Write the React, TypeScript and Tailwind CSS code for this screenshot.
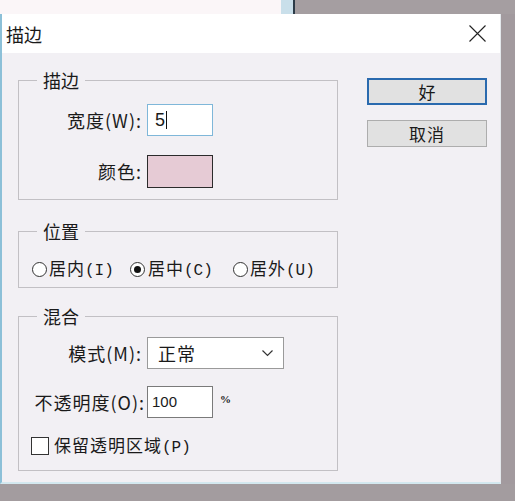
import React from "react";

const font = { fontFamily: '"Noto Sans CJK SC", "Noto Sans", sans-serif' };
const mono = { fontFamily: '"Liberation Mono", monospace' };

function Radio({ checked }: { checked?: boolean }) {
  return (
    <span className="w-[15px] h-[15px] rounded-full border border-[#333] bg-white flex items-center justify-center shrink-0">
      {checked && <span className="w-[7px] h-[7px] rounded-full bg-[#111]" />}
    </span>
  );
}

function Sim({ cjk, key2 }: { cjk: string; key2: string }) {
  return (
    <span className="whitespace-nowrap leading-[22px]">
      <span className="tracking-[1px]">{cjk}</span>
      <span className="text-[16px]" style={mono}>({key2})</span>
    </span>
  );
}

export default function App() {
  return (
    <div
      className="w-[515px] h-[501px] bg-[#a39c9f] overflow-hidden flex flex-col text-[#1a1a1a]"
      style={font}
    >
      {/* background window strip */}
      <div className="h-[14px] flex shrink-0">
        <div className="w-[281px] bg-[#fbf6f8]" />
        <div className="w-[12px] bg-[#c9dfea]" />
        <div className="w-[2px] bg-[#2c3b48]" />
        <div className="flex-1 bg-[#a59ea1]" />
      </div>

      <div className="flex h-[470px] shrink-0">
        {/* dialog */}
        <div className="w-[501px] flex flex-col bg-[#f2f0f4] border-l-2 border-l-[#8cc0d8] border-r border-r-[#e3e8ec] border-b-2 border-b-[#d3e8ef]">
          {/* title bar */}
          <div className="h-[39px] bg-white flex items-center justify-between pl-[4px] pr-[14px] shrink-0">
            <span className="text-[18px] leading-none">描边</span>
            <svg width="17" height="17" viewBox="0 0 17 17">
              <path d="M0.5 0.5 L16.5 16.5 M16.5 0.5 L0.5 16.5" stroke="#222" strokeWidth="1.1" />
            </svg>
          </div>

          {/* body */}
          <div className="flex flex-1 pl-[16px] text-[18px]">
            <div className="w-[320px] flex flex-col">
              {/* 描边 group */}
              <fieldset className="mt-[16px] border border-[#c2c0c4] pb-[11px]">
                <legend className="ml-[18px] px-[6px] h-[22px] leading-[22px]">描边</legend>
                <div className="flex flex-col gap-[19px] pt-[13px]">
                  <div className="flex items-center">
                    <div className="w-[123px] flex justify-end whitespace-nowrap tracking-[1px]">宽度(W):</div>
                    <div className="ml-[5px] w-[66px] h-[32px] bg-white border border-[#7fb7d9] flex items-center pl-[7px] text-[18px]" style={{ fontFamily: '"Liberation Sans", sans-serif' }}>
                      5<span className="ml-[1px] w-[1px] h-[18px] bg-[#111]" />
                    </div>
                  </div>
                  <div className="flex items-center">
                    <div className="w-[123px] flex justify-end whitespace-nowrap tracking-[1px]">颜色:</div>
                    <div className="ml-[5px] w-[66px] h-[33px] bg-[#e6cbd5] border border-[#2b2b2b]" />
                  </div>
                </div>
              </fieldset>

              {/* 位置 group */}
              <fieldset className="mt-[20px] border border-[#c2c0c4] pb-[8px]">
                <legend className="ml-[18px] px-[6px] h-[22px] leading-[22px]">位置</legend>
                <div className="flex items-center pt-[17px] pl-[13px] h-[37px] text-[17px]">
                  <div className="w-[98px] flex items-center gap-[2px]">
                    <Radio />
                    <Sim cjk="居内" key2="I" />
                  </div>
                  <div className="w-[103px] flex items-center gap-[3px]">
                    <Radio checked />
                    <Sim cjk="居中" key2="C" />
                  </div>
                  <div className="flex items-center gap-[2px]">
                    <Radio />
                    <Sim cjk="居外" key2="U" />
                  </div>
                </div>
              </fieldset>

              {/* 混合 group */}
              <fieldset className="mt-[17px] border border-[#c2c0c4] pb-[11px]">
                <legend className="ml-[18px] px-[6px] h-[22px] leading-[22px]">混合</legend>
                <div className="flex flex-col pt-[10px]">
                  <div className="flex items-center">
                    <div className="w-[123px] flex justify-end whitespace-nowrap tracking-[1px]">模式(M):</div>
                    <div className="ml-[5px] w-[137px] h-[32px] bg-white border border-[#9a9a9a] flex items-center justify-between pl-[10px] pr-[10px]">
                      <span className="tracking-[1px]">正常</span>
                      <svg width="11" height="7" viewBox="0 0 11 7">
                        <path d="M0.5 0.5 L5.5 5.5 L10.5 0.5" fill="none" stroke="#333" strokeWidth="1.2" />
                      </svg>
                    </div>
                  </div>
                  <div className="flex items-center mt-[17px]">
                    <div className="w-[126px] flex justify-end whitespace-nowrap tracking-[1px]">不透明度(O):</div>
                    <div className="ml-[2px] w-[66px] h-[32px] bg-white border border-[#7a7a7a] flex items-center pl-[4px] text-[15px]" style={{ fontFamily: '"Liberation Sans", sans-serif' }}>
                      100
                    </div>
                    <span className="ml-[7px] -mt-[6px] text-[11px] font-bold" style={{ fontFamily: '"Liberation Serif", serif' }}>%</span>
                  </div>
                  <div className="flex items-center mt-[14px] pl-[12px] text-[17px]">
                    <span className="w-[18px] h-[18px] border border-[#333] bg-white shrink-0" />
                    <span className="ml-[5px]">
                      <Sim cjk="保留透明区域" key2="P" />
                    </span>
                  </div>
                </div>
              </fieldset>
            </div>

            {/* buttons */}
            <div className="ml-[29px] flex flex-col pt-[25px] gap-[15px]">
              <div className="w-[120px] h-[27px] bg-[#e1e1e1] border-2 border-[#2a6aae] flex items-center justify-center text-[17px] leading-none">
                好
              </div>
              <div className="w-[120px] h-[27px] bg-[#e1e1e1] border border-[#adadad] flex items-center justify-center text-[17px] leading-none tracking-[1px]">
                取消
              </div>
            </div>
          </div>
        </div>
        <div className="flex-1 bg-[#a29a9e]" />
      </div>
    </div>
  );
}
